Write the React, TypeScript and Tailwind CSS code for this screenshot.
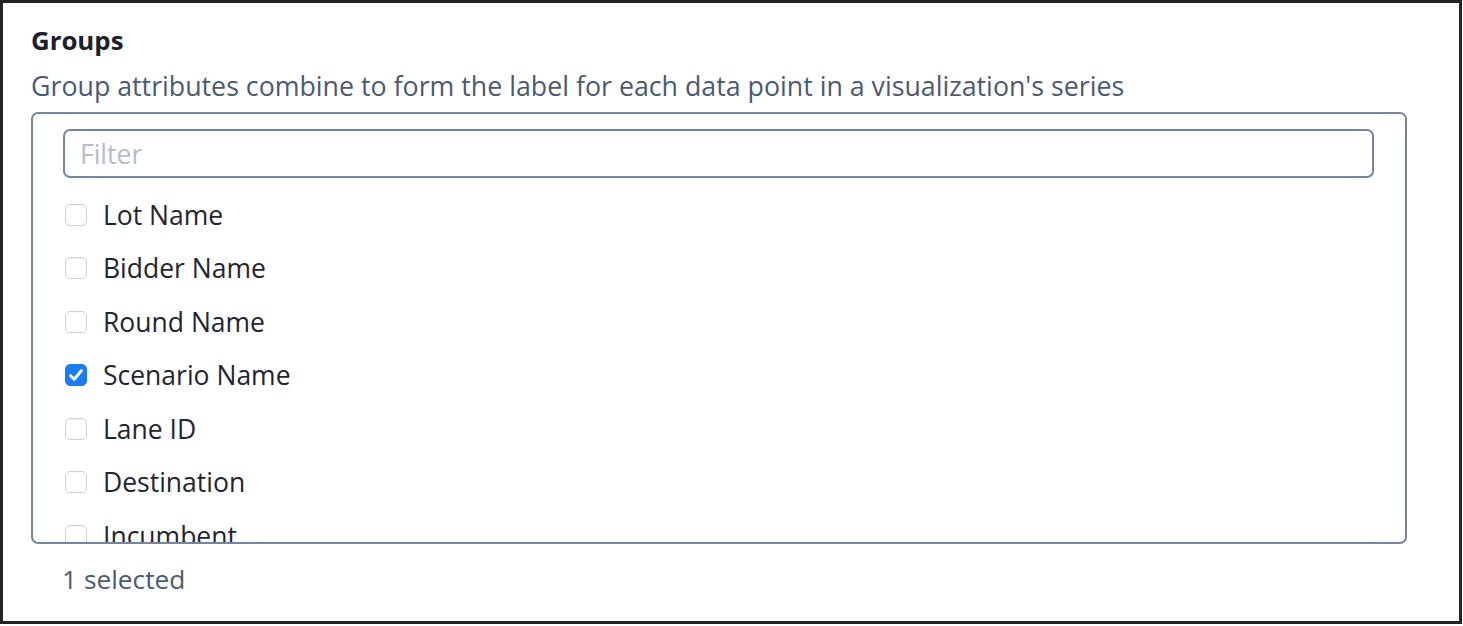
import { useState } from "react";

const GROUP_OPTIONS = [
  "Lot Name",
  "Bidder Name",
  "Round Name",
  "Scenario Name",
  "Lane ID",
  "Destination",
  "Incumbent",
];

const CheckMark = () => (
  <svg viewBox="0 0 16 16" className="w-[18px] h-[18px]" fill="none">
    <path
      d="M3.2 8.6 6.4 11.8 12.8 4.2"
      stroke="white"
      strokeWidth="2.6"
      strokeLinecap="round"
      strokeLinejoin="round"
    />
  </svg>
);

const GroupRow = ({
  label,
  checked,
  onToggle,
}: {
  label: string;
  checked: boolean;
  onToggle: () => void;
}) => (
  <label className="flex items-center gap-[16px] h-[53.5px] cursor-pointer" onClick={onToggle}>
    <span
      className={
        checked
          ? "flex items-center justify-center w-[22px] h-[22px] rounded-[5px] bg-[#1a7cf5] border border-[#1a7cf5]"
          : "flex items-center justify-center w-[22px] h-[22px] rounded-[5px] bg-white border border-[#cfd2d6] shadow-[inset_0_1px_1px_rgba(0,0,0,0.04)]"
      }
    >
      {checked && <CheckMark />}
    </span>
    <span className="text-[26.5px] text-[#1f2533] leading-none">{label}</span>
  </label>
);

export default function App() {
  const [selected, setSelected] = useState<string[]>(["Scenario Name"]);

  const toggle = (name: string) =>
    setSelected((prev) =>
      prev.includes(name) ? prev.filter((n) => n !== name) : [...prev, name]
    );

  return (
    <div
      className="w-[1462px] h-[624px] border-[3px] border-[#242424] bg-white"
      style={{ fontFamily: '"Open Sans", "Noto Sans", sans-serif' }}
    >
      <div className="pl-[28px] pr-[52px] pt-[21px]">
        <h2 className="text-[25.8px] font-bold text-[#1a202c] leading-[32px]">Groups</h2>
        <p className="mt-[14px] text-[26.75px] text-[#4a5a75] leading-[32px] whitespace-nowrap">
          Group attributes combine to form the label for each data point in a visualization's series
        </p>
        <div className="mt-[10px] h-[432px] border-2 border-[#7386a0] rounded-[7px] pl-[30px] pr-[31px] pt-[15px] overflow-hidden">
          <input
            type="text"
            placeholder="Filter"
            className="w-full h-[49px] border-2 border-[#7386a0] rounded-[7px] px-[15px] text-[26.5px] text-[#1f2533] placeholder:text-[#b3bccb] outline-none"
          />
          <div className="mt-[10px] pl-[2px]">
            {GROUP_OPTIONS.map((name) => (
              <GroupRow
                key={name}
                label={name}
                checked={selected.includes(name)}
                onToggle={() => toggle(name)}
              />
            ))}
          </div>
        </div>
        <div className="pl-[31px] pt-[19px] text-[26.3px] text-[#4a5a75] leading-[32px]">
          {selected.length} selected
        </div>
      </div>
    </div>
  );
}
